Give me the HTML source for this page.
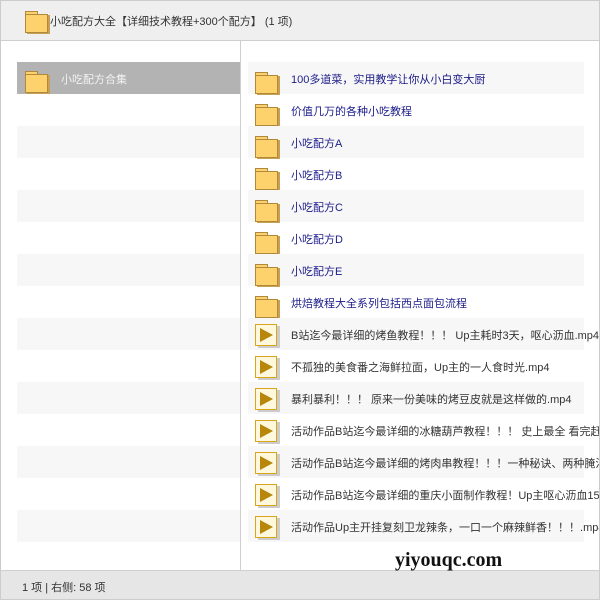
<!DOCTYPE html>
<html><head><meta charset="utf-8"><style>
*{margin:0;padding:0;box-sizing:border-box}
body{width:600px;height:600px;overflow:hidden;background:#fff;font-family:"Liberation Sans","Noto Sans CJK SC",sans-serif;font-size:11px;position:relative}
.hdr{position:absolute;left:0;top:0;width:600px;height:41px;background:#efefef;border-bottom:1px solid #cfcfcf;border-top:1px solid #ddd}
.hdr .t{position:absolute;left:50px;top:12px;color:#333;white-space:nowrap}
.fold{position:absolute;width:23px;height:21px}
.fold:before{content:"";position:absolute;left:0;top:0;width:11px;height:4px;background:#fdd16b;border:1px solid #b08a3a;border-bottom:none}
.fold:after{content:"";position:absolute;left:0;top:3px;width:21px;height:17px;background:#fdd16b;border:1px solid #b08a3a;box-shadow:2px 1px 0 #c7a055}
.vid{position:absolute;width:22px;height:22px;background:#fff8dc;border:1px solid #d9a420;box-shadow:3px 2px 0 #ccc}
.vid:after{content:"";position:absolute;left:4px;top:3px;border-left:13px solid #b8860b;border-top:7px solid transparent;border-bottom:7px solid transparent}
.div{position:absolute;left:240px;top:41px;width:1px;height:529px;background:#cfcfcf}
.ls{position:absolute;left:17px;width:223px;height:32px;background:#f7f7f7}
.rs{position:absolute;left:248px;width:336px;height:32px}
.rs.s{background:#f7f7f7}
.rs span{position:absolute;left:43px;top:9px;white-space:nowrap;color:#333;width:308px;overflow:hidden}
.rs.f span{color:#1c1c8a}
.ftr{position:absolute;left:0;top:570px;width:600px;height:30px;background:#e6e6e6;border-top:1px solid #cfcfcf}
.ftr span{position:absolute;left:22px;top:8px;color:#333}
.wm{position:absolute;left:395px;top:549px;font-family:"Liberation Serif",serif;font-weight:bold;font-size:20px;line-height:22px;color:#111}
.edge{position:absolute;left:0;top:0;width:600px;height:600px;border:1px solid #ccc;pointer-events:none}
</style></head><body>
<div class="hdr"><div class="fold" style="left:25px;top:10px"></div><div class="t">小吃配方大全【详细技术教程+300个配方】 (1 项)</div></div>
<div class="div"></div>
<div class="ls" style="top:62px;background:#b3b3b3"><div class="fold" style="left:8px;top:9px"></div><span style="position:absolute;left:44px;top:9px;color:#f2f2f2">小吃配方合集</span></div>
<div class="ls" style="top:126px"></div><div class="ls" style="top:190px"></div><div class="ls" style="top:254px"></div><div class="ls" style="top:318px"></div><div class="ls" style="top:382px"></div><div class="ls" style="top:446px"></div><div class="ls" style="top:510px"></div>

<div class="rs f s" style="top:62px"><div class="fold" style="left:7px;top:10px"></div><span>100多道菜，实用教学让你从小白变大厨</span></div>
<div class="rs f" style="top:94px"><div class="fold" style="left:7px;top:10px"></div><span>价值几万的各种小吃教程</span></div>
<div class="rs f s" style="top:126px"><div class="fold" style="left:7px;top:10px"></div><span>小吃配方A</span></div>
<div class="rs f" style="top:158px"><div class="fold" style="left:7px;top:10px"></div><span>小吃配方B</span></div>
<div class="rs f s" style="top:190px"><div class="fold" style="left:7px;top:10px"></div><span>小吃配方C</span></div>
<div class="rs f" style="top:222px"><div class="fold" style="left:7px;top:10px"></div><span>小吃配方D</span></div>
<div class="rs f s" style="top:254px"><div class="fold" style="left:7px;top:10px"></div><span>小吃配方E</span></div>
<div class="rs f" style="top:286px"><div class="fold" style="left:7px;top:10px"></div><span>烘焙教程大全系列包括西点面包流程</span></div>
<div class="rs s" style="top:318px"><div class="vid" style="left:7px;top:6px"></div><span>B站迄今最详细的烤鱼教程！！！ Up主耗时3天，呕心沥血.mp4</span></div>
<div class="rs" style="top:350px"><div class="vid" style="left:7px;top:6px"></div><span>不孤独的美食番之海鲜拉面，Up主的一人食时光.mp4</span></div>
<div class="rs s" style="top:382px"><div class="vid" style="left:7px;top:6px"></div><span>暴利暴利！！！ 原来一份美味的烤豆皮就是这样做的.mp4</span></div>
<div class="rs" style="top:414px"><div class="vid" style="left:7px;top:6px"></div><span>活动作品B站迄今最详细的冰糖葫芦教程！！！ 史上最全 看完赶紧收藏</span></div>
<div class="rs s" style="top:446px"><div class="vid" style="left:7px;top:6px"></div><span>活动作品B站迄今最详细的烤肉串教程！！！一种秘诀、两种腌法，</span></div>
<div class="rs" style="top:478px"><div class="vid" style="left:7px;top:6px"></div><span>活动作品B站迄今最详细的重庆小面制作教程！Up主呕心沥血15天</span></div>
<div class="rs s" style="top:510px"><div class="vid" style="left:7px;top:6px"></div><span>活动作品Up主开挂复刻卫龙辣条，一口一个麻辣鲜香！！！.mp4</span></div>
<div class="ftr"><span>1 项 | 右侧: 58 项</span></div>
<div class="wm">yiyouqc.com</div>
<div class="edge"></div>
</body></html>
